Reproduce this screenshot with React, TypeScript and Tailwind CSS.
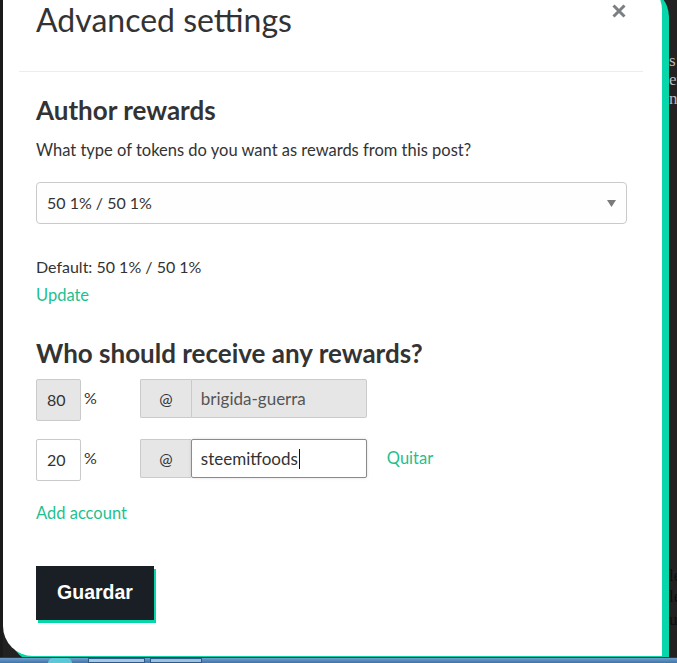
import React from 'react';

const green = 'text-[#1fbf8f]';

function PercentBox({ value, disabled }: { value: string; disabled?: boolean }) {
  return (
    <div className="flex items-start">
      <div
        className={`w-[45px] h-[42px] flex items-center pl-[10px] border border-[#cacaca] rounded-[2px] text-[16px] text-[#333] ${
          disabled ? 'bg-[#e6e6e6]' : 'bg-white'
        }`}
      >
        {value}
      </div>
      <span className="ml-[3px] mt-[7px] leading-[24px] text-[16px] text-[#333]">%</span>
    </div>
  );
}

function AccountBox({ name, disabled }: { name: string; disabled?: boolean }) {
  return (
    <div className="flex h-[39px] w-[227px]">
      <div className="w-[51px] flex items-center justify-center bg-[#e6e6e6] border border-[#cacaca] border-r-0 rounded-l-[2px] text-[16px] text-[#333]">
        @
      </div>
      {disabled ? (
        <div className="flex-1 flex items-center pl-[9px] bg-[#e6e6e6] border border-[#cacaca] rounded-r-[2px] text-[17px] text-[#555]">
          {name}
        </div>
      ) : (
        <div className="flex-1 flex items-center pl-[9px] bg-white border border-[#8a8a8a] rounded-[2px] shadow-[0_0_3px_rgba(0,0,0,0.15)] text-[17px] text-[#333]">
          {name}
          <span className="w-px h-[20px] bg-[#111] ml-px" />
        </div>
      )}
    </div>
  );
}

export default function App() {
  return (
    <div className="flex flex-col w-[677px] h-[663px] overflow-hidden bg-[#222] font-['Lato','Liberation_Sans',sans-serif]">
      <div className="flex h-[657px] overflow-hidden">
        <div className="w-[3px] shrink-0 bg-[#1b1b1b]" />

        <div className="relative w-[659px] shrink-0 h-[676px] -mt-[20px] pt-[20px] bg-white rounded-tr-[30px] rounded-bl-[30px] shadow-[7px_7px_0_#06d6a9]">
          <div className="relative h-[71px]">
            <h1 className="pl-[33px] text-[32px] leading-[40px] text-[#333]">Advanced settings</h1>
            <button className="absolute left-[606px] top-[2px] w-[20px] h-[18px] flex items-center justify-center">
              <svg width="14" height="14" viewBox="0 0 14 14">
                <path d="M1.5 1.5 L12.5 12.5 M12.5 1.5 L1.5 12.5" stroke="#7a7f84" strokeWidth="3" />
              </svg>
            </button>
          </div>
          <div className="ml-[16px] mr-[19px] h-px bg-[#ececec]" />

          <div className="pl-[33px] pr-[35px] text-[#333]">
            <h2 className="mt-[22px] text-[26px] leading-[32px] font-bold">Author rewards</h2>
            <p className="mt-[12px] text-[16.5px] leading-[24px]">
              What type of tokens do you want as rewards from this post?
            </p>
            <div className="mt-[20px] h-[42px] flex items-center justify-between pl-[10px] pr-[10px] bg-[#fefefe] border border-[#cacaca] rounded-[4px] text-[16px]">
              <span>50 1% / 50 1%</span>
              <svg width="9" height="7" viewBox="0 0 9 7">
                <path d="M0 0 H9 L4.5 7 Z" fill="#7a7a7a" />
              </svg>
            </div>
            <p className="mt-[29px] text-[16px] leading-[28px]">Default: 50 1% / 50 1%</p>
            <p className={`text-[16.5px] leading-[28px] ${green}`}>Update</p>

            <h2 className="mt-[28px] text-[26px] leading-[32px] font-bold">Who should receive any rewards?</h2>

            <div className="mt-[10px] flex items-start gap-[43px]">
              <PercentBox value="80" disabled />
              <AccountBox name="brigida-guerra" disabled />
            </div>
            <div className="mt-[18px] flex items-start gap-[43px]">
              <PercentBox value="20" />
              <div className="flex items-center">
                <AccountBox name="steemitfoods" />
                <span className={`ml-[20px] text-[16.5px] ${green}`}>Quitar</span>
              </div>
            </div>

            <p className={`mt-[20px] text-[16.5px] leading-[24px] ${green}`}>Add account</p>

            <button className="mt-[41px] w-[118px] h-[54px] bg-[#1a1f25] shadow-[2px_3px_0_#06d6a9] text-white text-[19.5px] font-bold font-['Liberation_Sans',Arial,sans-serif]">
              Guardar
            </button>
          </div>
        </div>

        <div className="pl-[7px] flex-1 overflow-hidden font-['Liberation_Serif',serif] text-[17px] leading-[19px] whitespace-nowrap">
          <div className="mt-[51px] text-[#bbb]">s</div>
          <div className="text-[#bbb]">er</div>
          <div className="text-[#bbb]">n</div>
          <div className="mt-[458px] text-[#0d0d0d]">le</div>
          <div className="mt-[2px] text-[#0d0d0d]">le</div>
          <div className="mt-[4px] text-[#0d0d0d]">us</div>
        </div>
      </div>

      <div className="h-[6px] flex items-start border-t border-[#1d3b5a] bg-gradient-to-b from-[#6f9fcb] to-[#3e74a8]">
        <div className="ml-[48px] w-[24px] h-[5px] rounded-t-full bg-[#5ec7d6]" />
        <div className="ml-[16px] w-[57px] h-[5px] border border-[#2d5a86] bg-[#a8c7e2]" />
        <div className="ml-[5px] w-[52px] h-[5px] border border-[#2d5a86] bg-[#9fc0dd]" />
      </div>
    </div>
  );
}
